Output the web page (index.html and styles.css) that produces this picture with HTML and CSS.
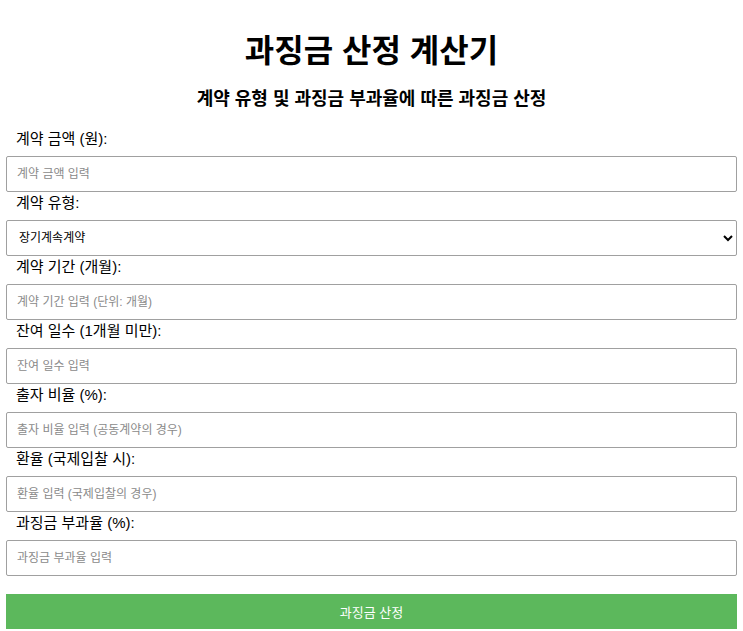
FILE: index.html
```html
<!DOCTYPE html>
<html lang="ko">
  <head>
    <meta charset="UTF-8" />
    <meta name="viewport" content="width=device-width, initial-scale=1.0" />
    <title>과징금 산정 계산기</title>
    <link rel="stylesheet" href="styles.css">
  </head>
  <body>
    <div class="calc-container">
      <h1>과징금 산정 계산기</h1>
      <h2>계약 유형 및 과징금 부과율에 따른 과징금 산정</h2>
      <form class="calc-form" onsubmit="return false;">
        <label for="amount">계약 금액 (원):</label>
        <input type="text" id="amount" placeholder="계약 금액 입력" />

        <label for="contract-type">계약 유형:</label>
        <select id="contract-type">
          <option>장기계속계약</option>
          <option>일반계약</option>
          <option>공동계약</option>
        </select>

        <label for="period">계약 기간 (개월):</label>
        <input type="text" id="period" placeholder="계약 기간 입력 (단위: 개월)" />

        <label for="days">잔여 일수 (1개월 미만):</label>
        <input type="text" id="days" placeholder="잔여 일수 입력" />

        <label for="share">출자 비율 (%):</label>
        <input type="text" id="share" placeholder="출자 비율 입력 (공동계약의 경우)" />

        <label for="rate">환율 (국제입찰 시):</label>
        <input type="text" id="rate" placeholder="환율 입력 (국제입찰의 경우)" />

        <label for="penalty">과징금 부과율 (%):</label>
        <input type="text" id="penalty" placeholder="과징금 부과율 입력" />

        <button type="submit" id="calc-btn">과징금 산정</button>
      </form>
    </div>
  </body>
</html>
```

FILE: styles.css
```css
body {
  margin: 0;
  font-family: "Liberation Sans", "Noto Sans CJK KR", sans-serif;
  color: #000;
  background: #fff;
}

.calc-container {
  padding: 0 6px 0 6px;
}

h1 {
  margin: 0;
  padding-top: 31px;
  font-size: 32px;
  line-height: 40px;
  text-align: center;
}

h2 {
  margin: 0;
  padding-top: 16px;
  font-size: 18px;
  line-height: 24px;
  text-align: center;
}

.calc-form {
  display: flex;
  flex-direction: column;
  padding-top: 17px;
}

.calc-form label {
  display: block;
  padding-left: 10px;
  font-size: 15px;
  line-height: 21px;
  margin-bottom: 7px;
}

.calc-form input,
.calc-form select {
  box-sizing: border-box;
  width: 100%;
  height: 36px;
  margin: 0;
  padding: 0 10px;
  border: 1px solid #a0a0a0;
  border-radius: 2px;
  background: #fff;
  font-family: "Liberation Sans", "Noto Sans CJK KR", sans-serif;
  font-size: 12px;
  color: #000;
}

.calc-form select {
  padding-left: 8px;
}

.calc-form input::placeholder {
  color: #8a8a8a;
}

#calc-btn {
  margin-top: 18px;
  height: 35px;
  width: 100%;
  border: none;
  background-color: #5cb85c;
  color: #fff;
  font-family: "Liberation Sans", "Noto Sans CJK KR", sans-serif;
  font-size: 13px;
  cursor: pointer;
}

#calc-btn:hover {
  background-color: #4cae4c;
}
```
